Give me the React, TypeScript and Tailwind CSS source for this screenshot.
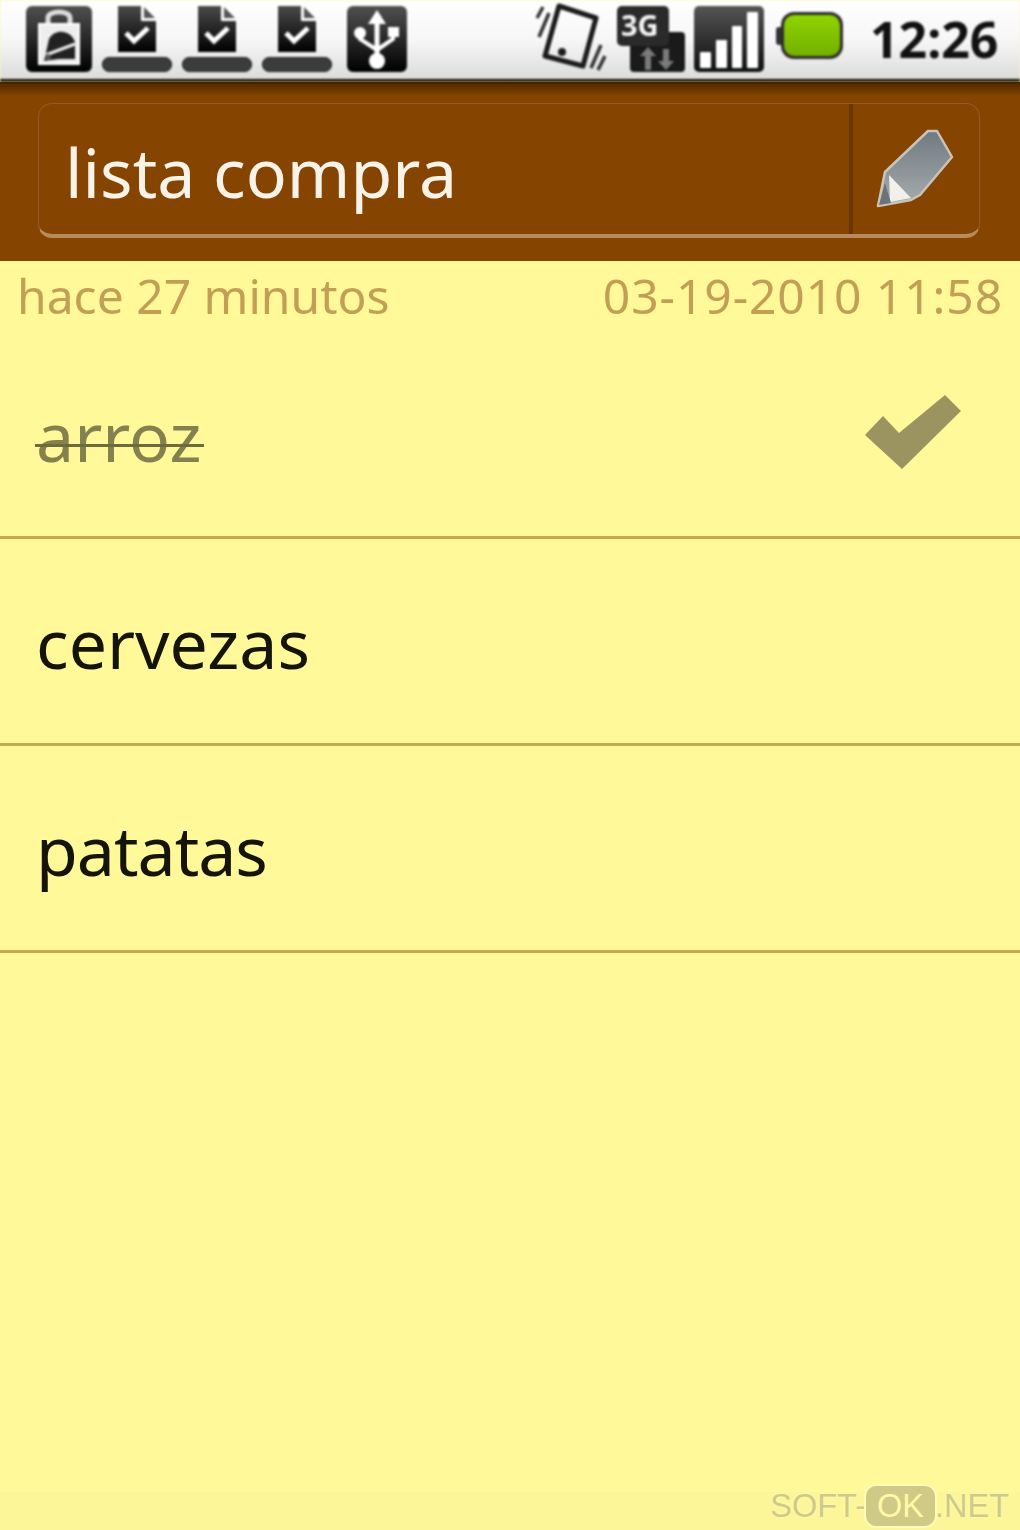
const sans = "font-['Noto_Sans','Open_Sans',sans-serif]";

const DocDone = (): JSX.Element => (
   <div className="flex flex-col items-center w-[70px] h-[66px]">
      <svg width="42" height="47" viewBox="0 0 42 47">
         <defs>
            <linearGradient id="docFill" x1="0" y1="0" x2="0" y2="1">
               <stop offset="0" stopColor="#4a4a4a" />
               <stop offset="1" stopColor="#000" />
            </linearGradient>
         </defs>
         <path d="M2 0H25V15H40V46H2Z" fill="url(#docFill)" />
         <path d="M28 1L39 12H28Z" fill="#555" />
         <path d="M10 27L18 35L32 22" fill="none" stroke="#fff" strokeWidth="5" />
      </svg>
      <div className="mt-[4px] w-[70px] h-[15px] rounded-[7px] bg-[#3c3c3c] border border-[#222]" />
   </div>
);

const BagIcon = (): JSX.Element => (
   <svg width="68" height="66" viewBox="0 0 68 66">
      <defs>
         <linearGradient id="tile" x1="0" y1="0" x2="0" y2="1">
            <stop offset="0" stopColor="#505050" />
            <stop offset="1" stopColor="#000" />
         </linearGradient>
      </defs>
      <rect x="1" y="0" width="66" height="66" rx="6" fill="url(#tile)" />
      <path d="M23 18V12C23 4 45 4 45 12V18" fill="none" stroke="#ddd" strokeWidth="5" />
      <path d="M14 18H54V58H14Z" fill="#eee" stroke="#fff" strokeWidth="2" />
      <path d="M24 33C30 22 46 24 50 36V53H34L19 55Z" fill="#222" />
      <path d="M18 50L50 38" stroke="#eee" strokeWidth="3" />
      <circle cx="23" cy="51" r="3" fill="#555" />
   </svg>
);

const UsbIcon = (): JSX.Element => (
   <svg width="62" height="66" viewBox="0 0 62 66">
      <rect x="1" y="0" width="60" height="66" rx="6" fill="url(#tile)" />
      <path d="M31 8V50" stroke="#fff" strokeWidth="5" />
      <path d="M31 4L40 18H22Z" fill="#fff" />
      <path d="M14 27V33L31 44L47 33V27" fill="none" stroke="#fff" strokeWidth="4" />
      <circle cx="14" cy="27" r="6" fill="#fff" />
      <rect x="42" y="21" width="11" height="10" fill="#fff" />
      <circle cx="31" cy="55" r="8" fill="#fff" />
   </svg>
);

const VibrateIcon = (): JSX.Element => (
   <svg width="72" height="68" viewBox="0 0 72 68">
      <path d="M25 3L62 15L49 63L11 53Z" fill="none" stroke="#1c1c1c" strokeWidth="5" strokeLinejoin="round" />
      <circle cx="28" cy="49" r="4" fill="#1c1c1c" />
      <path d="M3 15L9 4M5 34L15 10M57 65L67 42M64 67L71 53" stroke="#333" strokeWidth="3.5" />
   </svg>
);

const DataIcon = (): JSX.Element => (
   <div className="relative w-[68px] h-[66px]">
      <svg className="absolute inset-0" width="68" height="66" viewBox="0 0 68 66">
         <rect x="13" y="26" width="55" height="40" rx="4" fill="#1a1a1a" />
         <rect x="0" y="0" width="52" height="40" rx="5" fill="#2a2a2a" />
         <path d="M28 64V50H23L31 41L39 50H34V64Z" fill="#7a7a7a" />
         <path d="M46 43V55H41L49 64L57 55H52V43Z" fill="#7a7a7a" />
      </svg>
      <span className={`absolute left-[4px] top-[2px] text-[29px] leading-[34px] font-bold text-[#f4f4f4] ${sans}`}>3G</span>
   </div>
);

const SignalIcon = (): JSX.Element => (
   <div className="flex items-end gap-[5px] w-[70px] h-[66px] rounded-[5px] bg-gradient-to-b from-[#555] to-[#111] px-[6px] pb-[4px]">
      {[16, 28, 42, 56].map((h: number) => (
         <div key={h} className="flex-1 bg-white rounded-[1px]" style={{ height: h }} />
      ))}
   </div>
);

const BatteryIcon = (): JSX.Element => (
   <div className="flex items-center w-[67px] h-[47px]">
      <div className="w-[5px] h-[18px] bg-[#333] rounded-l-[3px]" />
      <div className="flex-1 h-[47px] rounded-[13px] bg-gradient-to-b from-[#8fd400] to-[#74b000] border-[3px] border-[#2c2c2c]" />
   </div>
);

const PencilIcon = (): JSX.Element => (
   <svg width="80" height="80" viewBox="0 0 80 80">
      <defs>
         <linearGradient id="pencil" x1="0" y1="0" x2="0" y2="1">
            <stop offset="0" stopColor="#6f7a80" />
            <stop offset="1" stopColor="#a8acae" />
         </linearGradient>
      </defs>
      <path d="M3 77L10 43L53 2H62L77 28L45 66L36 71Z" fill="url(#pencil)" stroke="#c9c4ba" strokeWidth="2.5" strokeLinejoin="round" />
      <path d="M14 46L36 69L15 73Z" fill="#f2f0ea" />
      <path d="M4 76L10 54L16 74Z" fill="#6b7378" />
   </svg>
);

const ListRow = ({ label, done, tight }: { label: string; done?: boolean; tight?: boolean }): JSX.Element => (
   <div className="flex items-center justify-between h-[207px] pt-[3px] pl-[36px] pr-[58px] border-b-[3px] border-[#c9a94f]">
      <span className={`relative text-[68px] leading-[80px] ${tight ? "tracking-[-1px]" : ""} ${done ? "text-[#85814f]" : "text-[#141408]"}`}>
         {label}
         {/* the strike sits lower than the browser's own line-through */}
         {done && <span className="absolute left-[-1px] right-[-3px] top-[48px] h-[3px] bg-[#6d6a3e]" />}
      </span>
      {done && (
         <svg className="mb-[7px]" width="98" height="76" viewBox="0 0 98 76">
            <path d="M1 41L19 22L35 39L81 1L97 17L38 75Z" fill="#9c9460" />
         </svg>
      )}
   </div>
);

export default function App() {
   return (
      <div className={`relative flex flex-col w-[1020px] h-[1530px] overflow-hidden bg-[#fff99a] ${sans}`}>
         {/* status bar */}
         <div className="flex items-center h-[82px] shrink-0 pl-[25px] pb-[4px] pt-[2px] border-b-[3px] border-[#1b1208] bg-gradient-to-b from-white via-[#f7f7f7] to-[#dcdcdc] blur-[0.8px]">
            <BagIcon />
            <div className="flex gap-[10px] ml-[9px]">
               <DocDone />
               <DocDone />
               <DocDone />
            </div>
            <div className="ml-[14px]"><UsbIcon /></div>
            <div className="ml-[126px] mb-[4px]"><VibrateIcon /></div>
            <div className="ml-[11px]"><DataIcon /></div>
            <div className="ml-[9px]"><SignalIcon /></div>
            <div className="ml-[12px] mb-[6px]"><BatteryIcon /></div>
            <span className="ml-[27px] text-[50px] leading-[60px] font-bold text-[#111]">12:26</span>
         </div>

         {/* title */}
         <div className="flex items-center h-[179px] shrink-0 pl-[38px] pr-[40px] pb-[2px] bg-gradient-to-b from-[#4d2700] via-[#854500] via-[8%] to-[#854500]">
            <div className="flex w-[942px] h-[135px] rounded-[14px] border border-[#94582a] border-b-[4px] border-b-[#b98a5c]">
               <div className="flex flex-1 items-center pl-[26px] pt-[5px]">
                  <span className="text-[68px] leading-[80px] text-[#f8f3e8] blur-[0.4px]">lista compra</span>
               </div>
               <div className="flex items-center justify-center w-[130px] border-l-[4px] border-[#693600] pr-[2px]">
                  <PencilIcon />
               </div>
            </div>
         </div>

         {/* timestamps */}
         <div className="flex justify-between h-[71px] shrink-0 pl-[17px] pr-[17px] text-[48px] leading-[70px] text-[#c39f55] blur-[0.4px]">
            <span>hace 27 minutos</span>
            <span className="tracking-[0.9px]">03-19-2010 11:58</span>
         </div>

         <div className="flex flex-col blur-[0.4px]">
            <ListRow label="arroz" done />
            <ListRow label="cervezas" />
            <ListRow label="patatas" tight />
         </div>

         <div className="absolute bottom-0 left-0 right-0 h-[38px] bg-[#fcf698]" />

         {/* watermark */}
         <div className="absolute right-[11px] bottom-[4px] flex items-center font-['Liberation_Sans',sans-serif] text-[32.5px] leading-[40px] text-[#cfca85] [text-shadow:0_0_3px_#fffbc0]">
            <span>SOFT-</span>
            <span className="px-[11px] rounded-[10px] bg-[#cfca85] ring-2 ring-[#fffab5] text-[#fff9a6] [text-shadow:none]">OK</span>
            <span>.NET</span>
         </div>
      </div>
   );
}
